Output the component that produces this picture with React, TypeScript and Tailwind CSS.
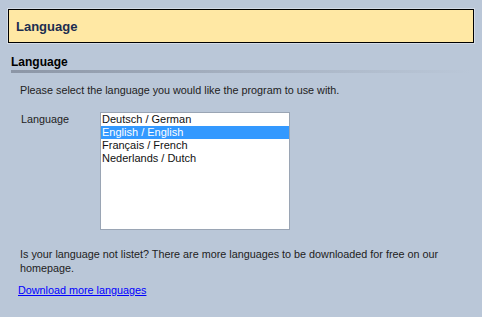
const languages = ['Deutsch / German', 'English / English', 'Français / French', 'Nederlands / Dutch']

export default function App() {
  const selected = 1

  return (
    <div className="h-[317px] w-[482px] bg-[#bac7d8] pt-[9px] font-['Liberation_Sans',Arial,sans-serif] text-[10.8px] text-[#222]">
      <div className="mx-[8px] flex h-[34px] items-center border border-black bg-[#ffe8a4] px-[7px] pt-[2px] shadow-[0_0_0_1px_#d3dbe6]">
        <h1 className="text-[13px] font-bold text-[#1c2d50]">Language</h1>
      </div>

      <div className="mx-[11px] mt-[11px]">
        <h2 className="text-[12px] leading-[16px] font-bold text-black">Language</h2>
        <div className="h-[3px] bg-gradient-to-r from-[#8c96a6] via-[#a6b1c1] to-[#bac7d8]" />
      </div>

      <div className="px-[20px]">
        <p className="mt-[11px] leading-[13px]">Please select the language you would like the program to use with.</p>

        <div className="mt-[15px] flex">
          <span className="w-[80px] pl-[1px] pt-[1px] leading-[13px]">Language</span>
          <ul className="h-[118px] w-[190px] border border-[#9aa5b4] bg-white text-[11px]">
            {languages.map((lang, i) => (
              <li
                key={lang}
                className={
                  i === selected
                    ? 'bg-[#3399ff] pl-[1px] leading-[13px] text-white'
                    : 'pl-[1px] leading-[13px] text-[#111]'
                }
              >
                {lang}
              </li>
            ))}
          </ul>
        </div>

        <p className="mt-[17px] leading-[14px]">
          Is your language not listet? There are more languages to be downloaded for free on our homepage.
        </p>
        <a href="#" className="-ml-[2px] mt-[9px] block leading-[13px] text-[#0000ff] underline">
          Download more languages
        </a>
      </div>
    </div>
  )
}
